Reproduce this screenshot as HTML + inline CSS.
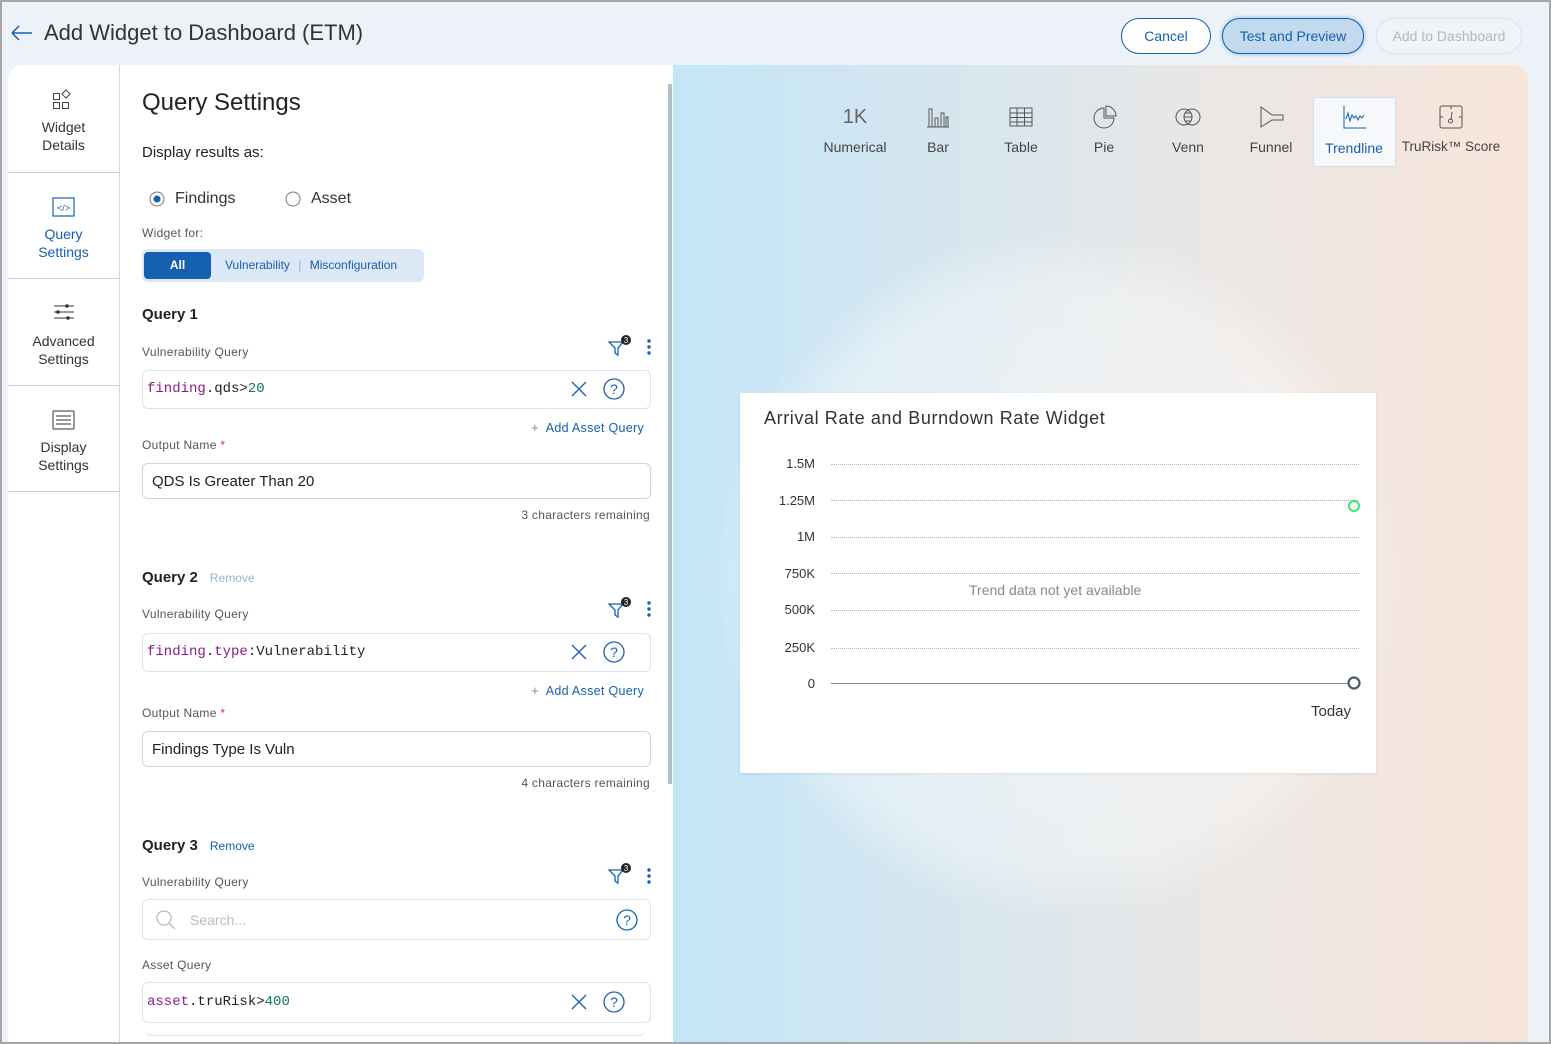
<!DOCTYPE html>
<html><head><meta charset="utf-8"><style>
*{box-sizing:border-box;margin:0;padding:0}
body{width:1551px;height:1044px;overflow:hidden;font-family:"Liberation Sans",sans-serif;background:#edf2f9;position:relative;color:#222}
.a{position:absolute}
.frame{position:absolute;inset:0;border:2px solid #a7a7a7;pointer-events:none;z-index:50}
.btn{position:absolute;top:18px;height:36px;border-radius:18px;font-size:14px;display:flex;align-items:center;justify-content:center}
.side{position:absolute;left:8px;width:111px;text-align:center;font-size:14px;line-height:18px;color:#333}
.sep{position:absolute;left:8px;width:111px;height:1px;background:#c9d1d8}
.lbl{position:absolute;font-size:12px;color:#555;letter-spacing:.3px}
.inp{position:absolute;left:142px;width:509px;border:1px solid #dbe2ea;border-radius:6px;background:#fff}
.code{position:absolute;left:4px;font-family:"Liberation Mono",monospace;font-size:14px}
.kw{color:#8b1a8b}.num{color:#0a7a50}
.ic{position:absolute;text-align:center;font-size:14px;color:#444;white-space:nowrap}
.yl{position:absolute;right:0;font-size:13px;color:#333;text-align:right;width:60px}
.grid{position:absolute;left:831px;width:528px;border-top:1px dotted #a9b7c3}
.h{font-size:15px;font-weight:bold;color:#222;position:absolute;left:142px}
.rm{font-size:12px;margin-left:12px;font-weight:normal}
.r{position:absolute;right:0;white-space:nowrap}
</style></head><body>
<div class="frame"></div>
<svg class="a" style="left:10px;top:24px" width="24" height="18"><path d="M2 9H22M2 9L9 2M2 9L9 16" stroke="#1560b0" stroke-width="1.5" fill="none"/></svg>
<div class="a" style="left:44px;top:20px;font-size:22px;color:#333">Add Widget to Dashboard (ETM)</div>
<div class="btn" style="left:1121px;width:90px;border:1px solid #1560b0;color:#1560b0;background:#fff">Cancel</div>
<div class="btn" style="left:1222px;width:142px;border:1px solid #1560b0;color:#1560b0;background:#c3d9ee;box-shadow:0 0 4px #7fb0e0">Test and Preview</div>
<div class="btn" style="left:1376px;width:146px;border:1px solid #dde3ea;color:#b0b8c2;background:#f0f3f7">Add to Dashboard</div>

<div class="a" style="left:8px;top:65px;width:665px;height:979px;background:#fff;border-top-left-radius:14px"></div>
<div class="a" style="left:119px;top:65px;width:1px;height:979px;background:#d3d9df"></div>
<div class="a" style="left:668px;top:84px;width:4px;height:700px;background:#b3bec7"></div>
<div class="a" style="left:673px;top:65px;width:28px;height:33px;background:#fff"></div>
<svg class="a" style="left:683px;top:74px" width="12" height="16"><path d="M9 1L3 8L9 15" stroke="#333" stroke-width="1.5" fill="none"/></svg>

<svg class="a" style="left:52px;top:89px" width="22" height="22"><rect x="1.5" y="4.5" width="6" height="6" fill="none" stroke="#444"/><rect x="1.5" y="13.5" width="6" height="6" fill="none" stroke="#444"/><rect x="10.5" y="13.5" width="6" height="6" fill="none" stroke="#444"/><path d="M14 1L18 5L14 9L10 5Z" fill="none" stroke="#444"/></svg>
<div class="side" style="top:118px">Widget<br>Details</div>
<div class="sep" style="top:172px"></div>
<svg class="a" style="left:52px;top:197px" width="23" height="20"><rect x="1" y="1" width="21" height="18" fill="none" stroke="#1560b0" stroke-width="1.2"/><text x="11.5" y="14" font-size="9" text-anchor="middle" fill="#1560b0" font-family="Liberation Sans">&lt;/&gt;</text></svg>
<div class="side" style="top:225px;color:#1560b0">Query<br>Settings</div>
<div class="sep" style="top:278px"></div>
<svg class="a" style="left:53px;top:303px" width="22" height="18"><path d="M1 3H21M1 9H21M1 15H21" stroke="#333"/><circle cx="14" cy="3" r="1.8" fill="#333"/><circle cx="5" cy="9" r="1.8" fill="#333"/><circle cx="15" cy="15" r="1.8" fill="#333"/></svg>
<div class="side" style="top:332px">Advanced<br>Settings</div>
<div class="sep" style="top:385px"></div>
<svg class="a" style="left:52px;top:410px" width="23" height="20"><rect x="1" y="1" width="21" height="18" rx="1" fill="none" stroke="#333"/><path d="M4 6H19M4 10H19M4 14H19" stroke="#333"/></svg>
<div class="side" style="top:438px">Display<br>Settings</div>
<div class="sep" style="top:491px"></div>

<div class="a" style="left:142px;top:89px;font-size:24px;color:#222">Query Settings</div>
<div class="a" style="left:142px;top:144px;font-size:15px;color:#222">Display results as:</div>
<svg class="a" style="left:148px;top:190px" width="18" height="18"><circle cx="9" cy="9" r="7" fill="none" stroke="#777"/><circle cx="9" cy="9" r="3.5" fill="#1560b0"/></svg>
<div class="a" style="left:175px;top:190px;font-size:16px;color:#333">Findings</div>
<svg class="a" style="left:284px;top:190px" width="18" height="18"><circle cx="9" cy="9" r="7" fill="none" stroke="#777"/></svg>
<div class="a" style="left:311px;top:190px;font-size:16px;color:#333">Asset</div>
<div class="lbl" style="left:142px;top:226px">Widget for:</div>
<div class="a" style="left:142px;top:249px;width:282px;height:33px;background:#dce8f5;border-radius:6px"></div>
<div class="a" style="left:144px;top:252px;width:67px;height:27px;background:#1560b0;border-radius:4px;color:#fff;font-size:12px;font-weight:bold;text-align:center;line-height:27px">All</div>
<div class="a" style="left:225px;top:258px;font-size:12px;color:#1560b0">Vulnerability <span style="color:#aaa;margin:0 5px">|</span> Misconfiguration</div>

<div class="h" style="top:306px">Query 1</div>
<div class="lbl" style="left:142px;top:345px">Vulnerability Query</div>
<svg class="a" style="left:607px;top:334px" width="28" height="24"><path d="M2 8H16L11 14V21L8 19V14Z" fill="none" stroke="#1560b0" stroke-width="1.3"/><circle cx="19" cy="6" r="5" fill="#222"/><text x="19" y="9" font-size="8" fill="#fff" text-anchor="middle" font-family="Liberation Sans">3</text></svg>
<svg class="a" style="left:646px;top:338px" width="6" height="20"><circle cx="3" cy="3" r="1.7" fill="#1560b0"/><circle cx="3" cy="9" r="1.7" fill="#1560b0"/><circle cx="3" cy="15" r="1.7" fill="#1560b0"/></svg>
<div class="inp" style="top:370px;height:39px"><div class="code" style="top:10px"><span class="kw">finding</span>.qds&gt;<span class="num">20</span></div></div>
<svg class="a" style="left:570px;top:380px" width="18" height="18"><path d="M2 2L16 16M16 2L2 16" stroke="#1560b0" stroke-width="1.3"/></svg>
<svg class="a" style="left:602px;top:377px" width="24" height="24"><circle cx="12" cy="12" r="10" fill="none" stroke="#1560b0" stroke-width="1.3"/><text x="12" y="17" font-size="14" text-anchor="middle" fill="#1560b0" font-family="Liberation Sans">?</text></svg>
<div class="a" style="left:400px;width:244px;top:421px;font-size:12.5px;color:#1560b0;letter-spacing:.3px"><span class="r"><span style="color:#888">+</span>&nbsp; Add Asset Query</span></div>
<div class="lbl" style="left:142px;top:438px">Output Name <span style="color:#e0342c">*</span></div>
<div class="inp" style="top:463px;height:36px;border-color:#c8d6e6"><div class="a" style="left:9px;top:9px;font-size:15px;color:#222">QDS Is Greater Than 20</div></div>
<div class="lbl" style="left:400px;width:250px;top:508px;font-size:12px"><span class="r">3 characters remaining</span></div>

<div class="h" style="top:569px">Query 2<span class="rm" style="color:#8fb3d9">Remove</span></div>
<div class="lbl" style="left:142px;top:607px">Vulnerability Query</div>
<svg class="a" style="left:607px;top:596px" width="28" height="24"><path d="M2 8H16L11 14V21L8 19V14Z" fill="none" stroke="#1560b0" stroke-width="1.3"/><circle cx="19" cy="6" r="5" fill="#222"/><text x="19" y="9" font-size="8" fill="#fff" text-anchor="middle" font-family="Liberation Sans">3</text></svg>
<svg class="a" style="left:646px;top:600px" width="6" height="20"><circle cx="3" cy="3" r="1.7" fill="#1560b0"/><circle cx="3" cy="9" r="1.7" fill="#1560b0"/><circle cx="3" cy="15" r="1.7" fill="#1560b0"/></svg>
<div class="inp" style="top:633px;height:39px"><div class="code" style="top:10px"><span class="kw">finding</span>.<span class="kw">type</span>:Vulnerability</div></div>
<svg class="a" style="left:570px;top:643px" width="18" height="18"><path d="M2 2L16 16M16 2L2 16" stroke="#1560b0" stroke-width="1.3"/></svg>
<svg class="a" style="left:602px;top:640px" width="24" height="24"><circle cx="12" cy="12" r="10" fill="none" stroke="#1560b0" stroke-width="1.3"/><text x="12" y="17" font-size="14" text-anchor="middle" fill="#1560b0" font-family="Liberation Sans">?</text></svg>
<div class="a" style="left:400px;width:244px;top:684px;font-size:12.5px;color:#1560b0;letter-spacing:.3px"><span class="r"><span style="color:#888">+</span>&nbsp; Add Asset Query</span></div>
<div class="lbl" style="left:142px;top:706px">Output Name <span style="color:#e0342c">*</span></div>
<div class="inp" style="top:731px;height:36px;border-color:#c8d6e6"><div class="a" style="left:9px;top:9px;font-size:15px;color:#222">Findings Type Is Vuln</div></div>
<div class="lbl" style="left:400px;width:250px;top:776px;font-size:12px"><span class="r">4 characters remaining</span></div>

<div class="h" style="top:837px">Query 3<span class="rm" style="color:#1560b0">Remove</span></div>
<div class="lbl" style="left:142px;top:875px">Vulnerability Query</div>
<svg class="a" style="left:607px;top:862px" width="28" height="24"><path d="M2 8H16L11 14V21L8 19V14Z" fill="none" stroke="#1560b0" stroke-width="1.3"/><circle cx="19" cy="6" r="5" fill="#222"/><text x="19" y="9" font-size="8" fill="#fff" text-anchor="middle" font-family="Liberation Sans">3</text></svg>
<svg class="a" style="left:646px;top:867px" width="6" height="20"><circle cx="3" cy="3" r="1.7" fill="#1560b0"/><circle cx="3" cy="9" r="1.7" fill="#1560b0"/><circle cx="3" cy="15" r="1.7" fill="#1560b0"/></svg>
<div class="inp" style="top:899px;height:41px"><div class="a" style="left:47px;top:12px;font-size:14px;color:#bbb">Search...</div></div>
<svg class="a" style="left:155px;top:909px" width="22" height="22"><circle cx="9" cy="9" r="7" fill="none" stroke="#bbb" stroke-width="1.3"/><path d="M14 14L20 20" stroke="#bbb" stroke-width="1.3"/></svg>
<svg class="a" style="left:615px;top:908px" width="24" height="24"><circle cx="12" cy="12" r="10" fill="none" stroke="#1560b0" stroke-width="1.3"/><text x="12" y="17" font-size="14" text-anchor="middle" fill="#1560b0" font-family="Liberation Sans">?</text></svg>
<div class="lbl" style="left:142px;top:958px">Asset Query</div>
<div class="inp" style="top:982px;height:41px"><div class="code" style="top:11px"><span class="kw">asset</span>.truRisk&gt;<span class="num">400</span></div></div>
<svg class="a" style="left:570px;top:993px" width="18" height="18"><path d="M2 2L16 16M16 2L2 16" stroke="#1560b0" stroke-width="1.3"/></svg>
<svg class="a" style="left:602px;top:990px" width="24" height="24"><circle cx="12" cy="12" r="10" fill="none" stroke="#1560b0" stroke-width="1.3"/><text x="12" y="17" font-size="14" text-anchor="middle" fill="#1560b0" font-family="Liberation Sans">?</text></svg>
<div class="a" style="left:145px;top:1030px;width:500px;height:6px;border-bottom:1px solid #dbe2ea;border-radius:0 0 6px 6px"></div>

<div class="a" style="left:673px;top:65px;width:855px;height:979px;border-top-right-radius:14px;background:linear-gradient(90deg,#c3e6f8 0%,#d8e6ee 35%,#ebe7e4 65%,#f8e5da 100%);overflow:hidden">
 <div class="a" style="left:45px;top:170px;width:680px;height:680px;border-radius:50%;background:radial-gradient(circle,rgba(255,255,255,.55) 0%,rgba(255,255,255,.35) 60%,rgba(255,255,255,0) 72%)"></div>
</div>
<div class="a" style="left:1313px;top:97px;width:83px;height:70px;background:#f6f8fb;border:1px solid #cfe0ef;border-radius:3px"></div>
<div class="ic" style="left:825px;top:106px;width:60px;font-size:20px;color:#666">1K</div>
<div class="ic" style="left:815px;top:139px;width:80px">Numerical</div>
<svg class="a" style="left:926px;top:106px" width="24" height="22"><path d="M1 21H23M3 21V3H6V21M9 21V12H12V21M15 21V7H18V21M20 21V11H22V21" fill="none" stroke="#555"/></svg>
<div class="ic" style="left:908px;top:139px;width:60px">Bar</div>
<svg class="a" style="left:1009px;top:107px" width="24" height="20"><rect x="1" y="1" width="22" height="18" fill="none" stroke="#555"/><path d="M1 6H23M1 10.5H23M1 15H23M8 1V19M15.5 1V19" stroke="#555"/></svg>
<div class="ic" style="left:991px;top:139px;width:60px">Table</div>
<svg class="a" style="left:1093px;top:104px" width="24" height="26"><path d="M11 4A10 10 0 1 0 21 14H11Z" fill="none" stroke="#555"/><path d="M13 2A10 10 0 0 1 23 12H13Z" fill="none" stroke="#555"/></svg>
<div class="ic" style="left:1074px;top:139px;width:60px">Pie</div>
<svg class="a" style="left:1175px;top:107px" width="26" height="20"><circle cx="9" cy="10" r="8" fill="none" stroke="#555"/><circle cx="17" cy="10" r="8" fill="none" stroke="#555"/><path d="M10 6H16M9.5 10H16.5M10 14H16" stroke="#555"/></svg>
<div class="ic" style="left:1158px;top:139px;width:60px">Venn</div>
<svg class="a" style="left:1260px;top:106px" width="24" height="22"><path d="M1 1L12 9H23V14H12L1 21Z" fill="none" stroke="#555"/></svg>
<div class="ic" style="left:1241px;top:139px;width:60px">Funnel</div>
<svg class="a" style="left:1343px;top:105px" width="24" height="24"><path d="M1 1V23H23" fill="none" stroke="#1560b0"/><path d="M3 14L5 8L7 16L9 10L11 13L13 11L15 15L17 11L19 13L21 10" fill="none" stroke="#1560b0"/></svg>
<div class="ic" style="left:1314px;top:140px;width:80px;color:#1560b0">Trendline</div>
<svg class="a" style="left:1439px;top:104px" width="24" height="26"><rect x="1" y="2" width="22" height="22" rx="2" fill="none" stroke="#555"/><path d="M12 2V5M1 13H4M20 13H23M13 8L12 16" stroke="#555"/><circle cx="11.5" cy="17" r="2" fill="none" stroke="#555"/></svg>
<div class="ic" style="left:1396px;top:139px;width:110px;font-size:13.5px">TruRisk™ Score</div>

<div class="a" style="left:740px;top:393px;width:636px;height:380px;background:#fff;box-shadow:0 1px 3px rgba(0,0,0,.08)"></div>
<div class="a" style="left:764px;top:408px;font-size:18px;color:#333;letter-spacing:.6px">Arrival Rate and Burndown Rate Widget</div>
<div class="a" style="left:755px;top:0;width:60px;height:1px">
<div class="yl" style="top:456px">1.5M</div>
<div class="yl" style="top:493px">1.25M</div>
<div class="yl" style="top:529px">1M</div>
<div class="yl" style="top:566px">750K</div>
<div class="yl" style="top:602px">500K</div>
<div class="yl" style="top:640px">250K</div>
<div class="yl" style="top:676px">0</div>
</div>
<div class="grid" style="top:464px"></div>
<div class="grid" style="top:500px"></div>
<div class="grid" style="top:537px"></div>
<div class="grid" style="top:573px"></div>
<div class="grid" style="top:610px"></div>
<div class="grid" style="top:648px"></div>
<div class="a" style="left:831px;top:683px;width:520px;height:1px;background:#7d8e9c"></div>
<div class="a" style="left:969px;top:582px;font-size:14px;color:#888">Trend data not yet available</div>
<svg class="a" style="left:1346px;top:498px" width="16" height="16"><circle cx="8" cy="8" r="5" fill="#fff" stroke="#3ee66a" stroke-width="2"/></svg>
<svg class="a" style="left:1346px;top:675px" width="16" height="16"><circle cx="8" cy="8" r="5.5" fill="#fff" stroke="#4a5a68" stroke-width="2.2"/></svg>
<div class="a" style="left:1311px;top:703px;font-size:15px;color:#333">Today</div>
</body></html>
